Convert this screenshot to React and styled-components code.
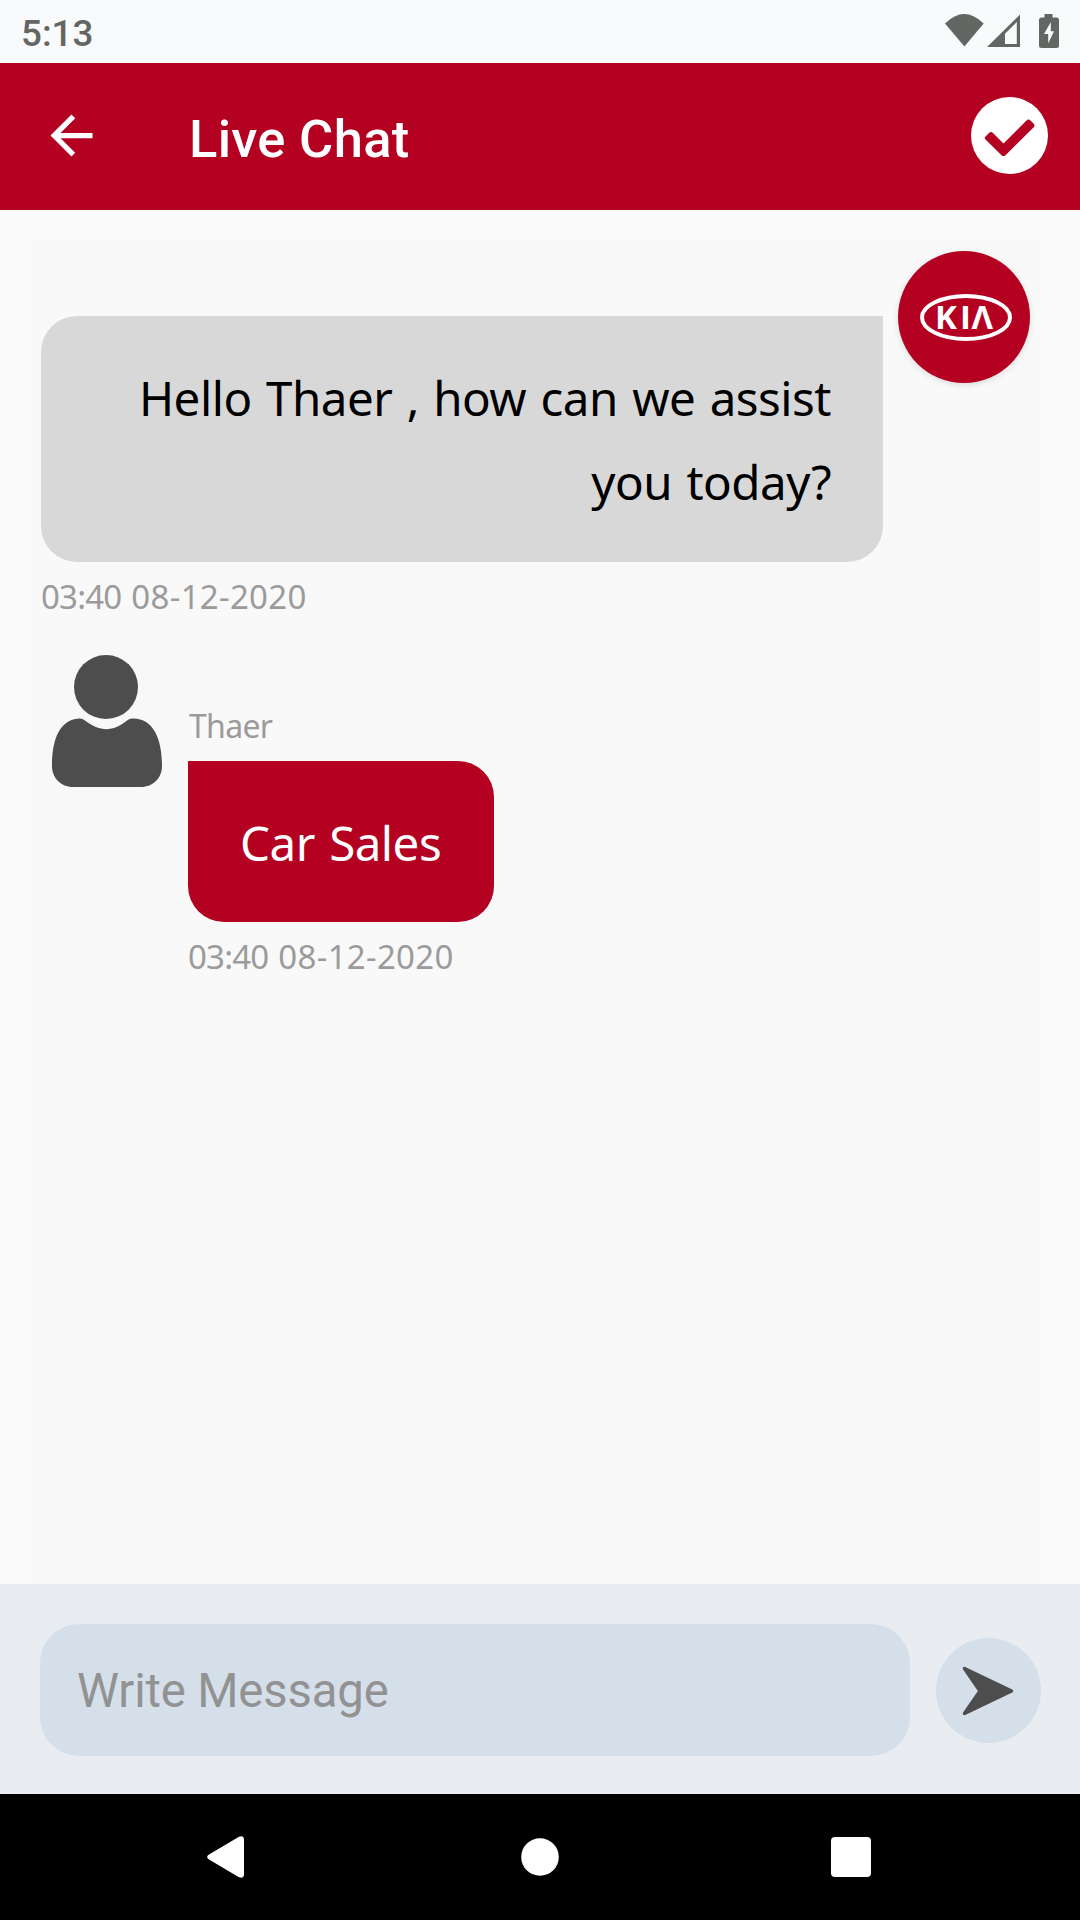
import React from "react";
import styled, { createGlobalStyle } from "styled-components";

const GlobalStyle = createGlobalStyle`
  * {
    box-sizing: border-box;
  }
  body {
    margin: 0;
    background: #fafafa;
    font-family: Roboto, sans-serif;
  }
  button {
    border: 0;
    padding: 0;
    background: none;
  }
  svg {
    display: block;
    flex-shrink: 0;
  }
`;

const Screen = styled.div`
  display: flex;
  flex-direction: column;
  width: 1080px;
  height: 1920px;
  overflow: hidden;
`;

const StatusBar = styled.div`
  display: flex;
  align-items: flex-start;
  justify-content: space-between;
  height: 63px;
  padding: 12px 20px 0 21px;
  background: #f8fafc;
  color: #646664;
`;

const Clock = styled.span`
  font-size: 36.75px;
  font-weight: 500;
  line-height: 43px;
`;

const StatusIcons = styled.div`
  display: flex;
  padding-top: 2px;
`;

const Header = styled.header`
  display: flex;
  align-items: center;
  height: 147px;
  padding: 0 32px 2px 40px;
  background: #b40021;
  color: white;
`;

const IconButton = styled.button`
  display: flex;
  color: inherit;
`;

const Title = styled.h1`
  flex: 1;
  margin: 0 0 0 86px;
  padding-top: 6px;
  font-size: 52.5px;
  font-weight: 500;
  line-height: 62px;
  letter-spacing: 0.3px;
`;

const Chat = styled.main`
  flex: 1;
  margin: 27px 38px 0 27px;
  padding: 14px 12px 0 14px;
  background: #f9f9f9;
`;

const Row = styled.div`
  display: flex;
  align-items: flex-start;
  gap: 15px;
  margin-top: ${props => props.$gap || 0}px;
`;

const Column = styled.div`
  padding-top: ${props => props.$top}px;
`;

const Bubble = styled.div`
  width: ${props => props.$width}px;
  height: ${props => props.$height}px;
  padding: 40px 52px 0 52px;
  border-radius: ${props => (props.$mine ? "0 36px 36px 36px" : "36px 0 36px 36px")};
  background: ${props => (props.$mine ? "#b40021" : "#d8d8d8")};
  color: ${props => (props.$mine ? "white" : "black")};
  font-family: "Noto Sans", sans-serif;
  font-size: 47.5px;
  line-height: 84px;
  text-align: ${props => (props.$mine ? "left" : "right")};
  letter-spacing: -0.5px;
  word-spacing: 2.5px;
  white-space: nowrap;
`;

const Stamp = styled.div`
  display: flex;
  gap: 10px;
  height: 44px;
  margin-top: 13px;
  color: #9b9b9b;
  font-family: "Noto Sans", sans-serif;
  font-size: 33px;
  line-height: 44px;
`;

const Time = styled.span`
  letter-spacing: -0.8px;
`;

const Day = styled.span`
  letter-spacing: 0.3px;
`;

const Sender = styled.div`
  height: 50px;
  padding-left: 1px;
  color: #9b9b9b;
  font-family: "Noto Sans", sans-serif;
  font-size: 32px;
  font-weight: 400;
  line-height: 30px;
  letter-spacing: -0.7px;
`;

const BrandAvatar = styled.div`
  width: 132px;
  height: 132px;
  border-radius: 50%;
  background: #b40021;
  box-shadow: 0 2px 6px rgba(0, 0, 0, 0.12);
`;

const UserAvatar = styled.div`
  width: 132px;
  height: 159px;
  background: #f8f8f8;
`;

const Composer = styled.form`
  display: flex;
  align-items: center;
  gap: 26px;
  height: 210px;
  padding: 2px 39px 0 40px;
  background: #e9edf2;
`;

const Input = styled.input`
  width: 870px;
  height: 132px;
  padding: 2px 38px 0 37px;
  border: 0;
  border-radius: 39px;
  outline: 0;
  background: #d5dfe9;
  font-family: Roboto, sans-serif;
  font-size: 47.25px;
  letter-spacing: -0.15px;
  &::placeholder {
    color: #929292;
    opacity: 1;
  }
`;

const SendButton = styled.button`
  width: 105px;
  height: 105px;
  border-radius: 50%;
  background: #d5dfe9;
`;

const NavBar = styled.nav`
  display: flex;
  align-items: center;
  height: 126px;
  padding-left: 207px;
  background: black;
`;

const NavButton = styled.button`
  margin-right: ${props => props.$gap || 0}px;
`;

const BackIcon = () => (
  <svg width="63" height="63" viewBox="0 0 24 24" fill="currentColor">
    <path d="M20 11H7.83l5.59-5.59L12 4l-8 8 8 8 1.41-1.41L7.83 13H20v-2z" />
  </svg>
);

const DoneIcon = () => (
  <svg width="77" height="77" viewBox="0 0 77 77">
    <circle cx="38.5" cy="38.5" r="38.5" fill="white" />
    <path
      d="M14.5 39.5L18 36Q20 34 22 36L32.5 46.5L55 24Q57.5 21.5 59.5 23.5L62.5 26.5Q64.5 28.5 62.5 30.5L34.5 58.2Q32.5 60 30.5 58.2L14.5 42.5Q13 41 14.5 39.5z"
      fill="#b40021"
    />
  </svg>
);

const DeviceIcons = () => (
  <svg width="115" height="35" viewBox="0 0 115 35" fill="currentColor">
    <path d="M0 9.5Q19.2 -9.5 38.7 9.5L19.4 32.5z" />
    <path d="M75 0.5V33H42zM71.8 8L60 19.8V30H71.8z" fillRule="evenodd" />
    <path
      d="M99.5 0h8v3.5h4q2.5 0 2.5 2.5v25.5q0 2.5-2.5 2.5H96.5q-2.500 0-2.500-2.500V6q0-2.500 2.500-2.500h3zM105.800 8L99 20h4.200v9.500L109 17.300h-3.200z"
      fillRule="evenodd"
    />
  </svg>
);

const KiaLogo = () => (
  <svg width="132" height="132" viewBox="0 0 132 132" role="img" aria-label="KIA">
    <ellipse cx="68" cy="66.500" rx="44" ry="21.500" fill="none" stroke="white" strokeWidth="4" />
    <text
      x="37 62 73.500"
      y="78.300"
      fill="white"
      fontFamily="Open Sans, sans-serif"
      fontSize="33"
      fontWeight="700"
    >
      KIΛ
    </text>
  </svg>
);

const UserIcon = () => (
  <svg width="132" height="159" viewBox="0 0 132 159" fill="#4d4d4d">
    <circle cx="65" cy="46" r="32" />
    <path d="M38 77.5Q41 77 44 79.5C59 91 72 91 86 79.5Q89 77 92 77.5C113 77.5 121 99 121 125C121 137 112 146 100 146H32C20 146 11 137 11 125C11 99 18 79 38 77.5z" />
  </svg>
);

const SendIcon = () => (
  <svg width="105" height="105" viewBox="0 0 105 105">
    <path
      d="M28.5 30.5L75.5 53L28.5 75.5L44 53z"
      fill="#4d4d4d"
      stroke="#4d4d4d"
      strokeWidth="3.5"
      strokeLinejoin="round"
    />
  </svg>
);

const MessageStamp = () => (
  <Stamp>
    <Time>03:40</Time>
    <Day>08-12-2020</Day>
  </Stamp>
);

const App = () => (
  <Screen>
    <GlobalStyle />
    <StatusBar>
      <Clock>5:13</Clock>
      <StatusIcons>
        <DeviceIcons />
      </StatusIcons>
    </StatusBar>
    <Header>
      <IconButton aria-label="Back">
        <BackIcon />
      </IconButton>
      <Title>Live Chat</Title>
      <IconButton aria-label="Done">
        <DoneIcon />
      </IconButton>
    </Header>
    <Chat>
      <Row>
        <Column $top={65}>
          <Bubble $width={842} $height={246}>
            Hello Thaer , how can we assist
            <br />
            you today?
          </Bubble>
          <MessageStamp />
        </Column>
        <BrandAvatar>
          <KiaLogo />
        </BrandAvatar>
      </Row>
      <Row $gap={22}>
        <UserAvatar>
          <UserIcon />
        </UserAvatar>
        <Column $top={70}>
          <Sender>Thaer</Sender>
          <Bubble $mine $width={306} $height={161}>
            Car Sales
          </Bubble>
          <MessageStamp />
        </Column>
      </Row>
    </Chat>
    <Composer>
      <Input placeholder="Write Message" />
      <SendButton type="button" aria-label="Send">
        <SendIcon />
      </SendButton>
    </Composer>
    <NavBar>
      <NavButton $gap={277} aria-label="Back">
        <svg width="37" height="42" viewBox="0 0 37 42" fill="white">
          <path d="M1.2 19L32 0.8Q37 -1 37 4V38Q37 43 32 41.2L1.2 23Q-0.8 21 1.2 19z" />
        </svg>
      </NavButton>
      <NavButton $gap={272} aria-label="Home">
        <svg width="38" height="38" viewBox="0 0 38 38" fill="white">
          <circle cx="19" cy="19" r="18.8" />
        </svg>
      </NavButton>
      <NavButton aria-label="Recent apps">
        <svg width="40" height="40" viewBox="0 0 40 40" fill="white">
          <rect width="40" height="40" rx="4" />
        </svg>
      </NavButton>
    </NavBar>
  </Screen>
);

export default App;
